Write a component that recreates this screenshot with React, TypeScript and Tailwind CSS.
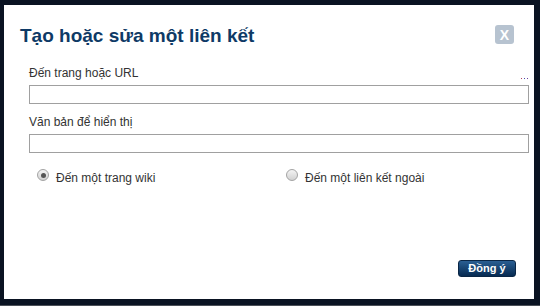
import React from 'react'

const font = { fontFamily: '"Liberation Sans", Arial, sans-serif' }

function Radio({ checked }: { checked?: boolean }) {
  return (
    <span className="flex h-[12px] w-[12px] shrink-0 items-center justify-center rounded-full border border-[#a3a3a3] bg-gradient-to-b from-[#f4f4f4] to-[#d2d2d2]">
      {checked && <span className="h-[5px] w-[5px] rounded-full bg-[#555]" />}
    </span>
  )
}

function Field({ label, dots }: { label: string; dots?: boolean }) {
  return (
    <div className="flex flex-col">
      <div className="flex items-end justify-between">
        <span className="text-[12px] leading-[14px] text-[#333]">{label}</span>
        {dots && (
          <span className="mr-[1px] mb-[1px] flex gap-[2px]">
            <span className="h-[1px] w-[1px] bg-[#b04060]" />
            <span className="h-[1px] w-[1px] bg-[#4050b0]" />
            <span className="h-[1px] w-[1px] bg-[#7040a0]" />
          </span>
        )}
      </div>
      <input className="mt-[5px] h-[19px] w-full border border-[#a0a0a0] bg-white outline-none" />
    </div>
  )
}

export default function App() {
  return (
    <div
      style={font}
      className="flex h-[306px] w-[540px] border-b border-[#4b5058] bg-[#0a1322] pt-[5px] pr-[6px] pb-[6px] pl-[4px]"
    >
      <div className="flex flex-1 flex-col bg-white">
        <div className="flex items-start justify-between pt-[19px] pr-[20px] pl-[16px]">
          <h1 className="text-[19px] leading-[23px] font-bold text-[#0e3a66]">
            Tạo hoặc sửa một liên kết
          </h1>
          <button className="mt-[1px] flex h-[19px] w-[19px] items-center justify-center rounded-[3px] bg-[#b7c3d0] text-[14px] leading-none font-bold text-white">
            X
          </button>
        </div>

        <div className="mt-[19px] mr-[5px] ml-[25px] flex flex-col">
          <Field label="Đến trang hoặc URL" dots />
          <div className="mt-[11px]">
            <Field label="Văn bản để hiển thị" />
          </div>

          <div className="mt-[16px] flex">
            <label className="flex w-[249px] items-start gap-[7px] pl-[8px]">
              <Radio checked />
              <span className="mt-[2px] text-[12px] leading-[14px] text-[#333]">Đến một trang wiki</span>
            </label>
            <label className="flex items-start gap-[7px] pl-[8px]">
              <Radio />
              <span className="mt-[2px] text-[12px] leading-[14px] text-[#333]">Đến một liên kết ngoài</span>
            </label>
          </div>
        </div>

        <div className="mt-auto mr-[18px] mb-[22px] flex justify-end">
          <button className="flex h-[17px] w-[58px] items-center justify-center rounded-[3px] border border-[#0a2645] bg-gradient-to-b from-[#2a5f93] to-[#072b52] text-[11px] leading-none font-bold text-white">
            Đồng ý
          </button>
        </div>
      </div>
    </div>
  )
}
